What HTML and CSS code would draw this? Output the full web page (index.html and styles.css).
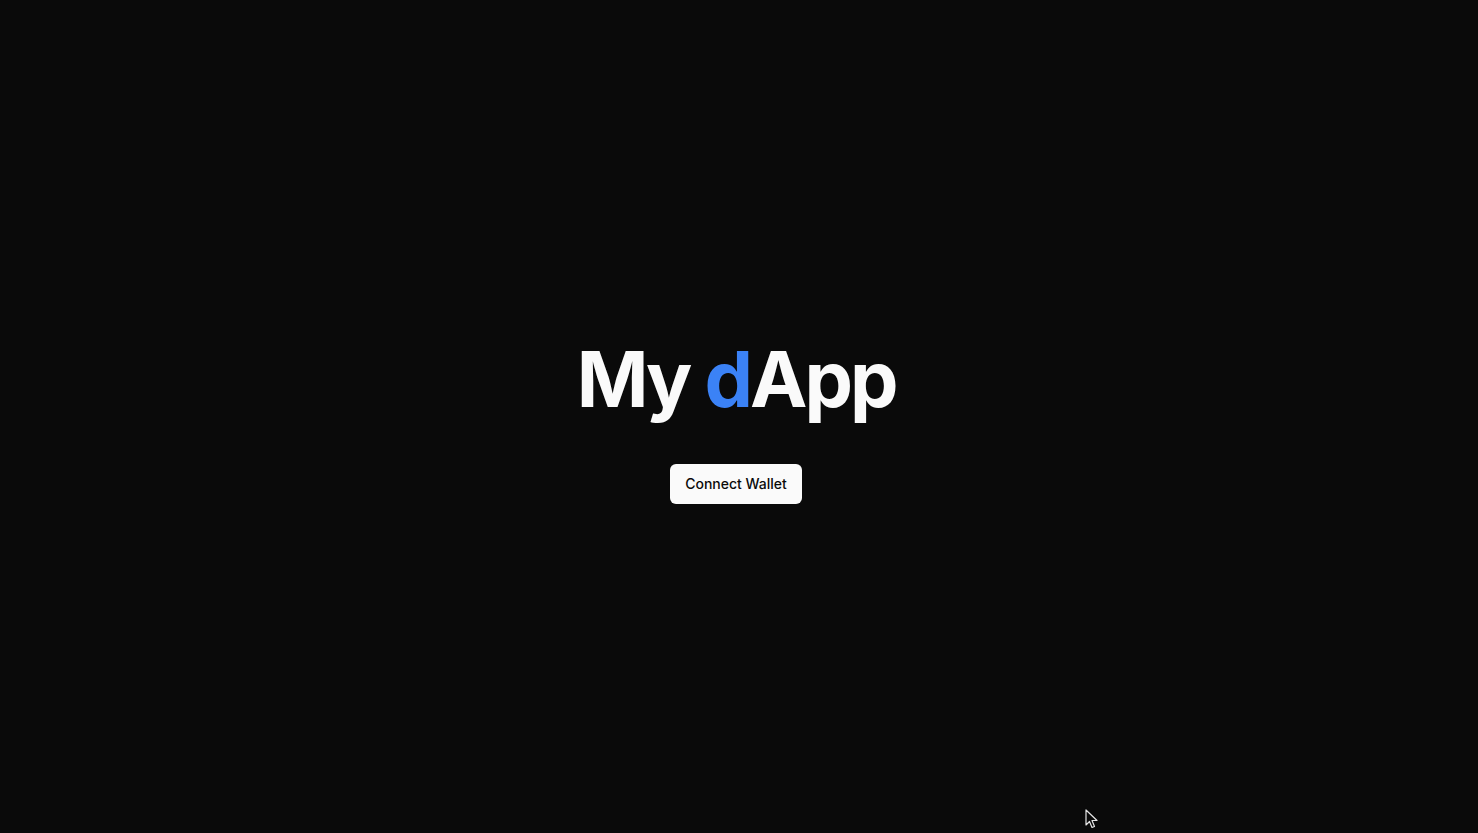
FILE: index.html
```html
<!DOCTYPE html>
<html>
<head>
<meta charset="utf-8">
<link rel="stylesheet" href="styles.css">
</head>
<body>
<main class="page">
  <h1 class="title">My <span class="accent">d</span>App</h1>
  <button class="btn">Connect Wallet</button>
</main>
<svg class="cursor" width="14" height="20" viewBox="0 0 14 20"><path d="M1 1 L1 16 L4.5 12.5 L7 18.5 L9.5 17.5 L7 11.5 L12 11.5 Z" fill="#0a0a0a" stroke="#e5e5e5" stroke-width="1.2" stroke-linejoin="round"/></svg>
</body>
</html>
```
FILE: styles.css
```css
html, body { margin: 0; padding: 0; }
body {
  background: #0a0a0a;
  font-family: Inter, "Noto Sans", sans-serif;
  color: #fafafa;
  height: 833px;
  overflow: hidden;
}
.page {
  box-sizing: border-box;
  height: 100%;
  padding: 11px 6px 0 0;
  display: flex;
  flex-direction: column;
  align-items: center;
  justify-content: center;
  gap: 46px;
}
.title {
  margin: 0;
  font-size: 77px;
  font-weight: 700;
  letter-spacing: -0.04em;
  line-height: 1;
  color: #fafafa;
}
.accent { color: #3b82f6; }
.btn {
  height: 40px;
  padding: 0 15px;
  border: none;
  border-radius: 6px;
  background: #fafafa;
  color: #0a0a0a;
  font-family: Inter, sans-serif;
  font-size: 14px;
  font-weight: 500;
}
.cursor { position: absolute; left: 1085px; top: 809px; }
```
